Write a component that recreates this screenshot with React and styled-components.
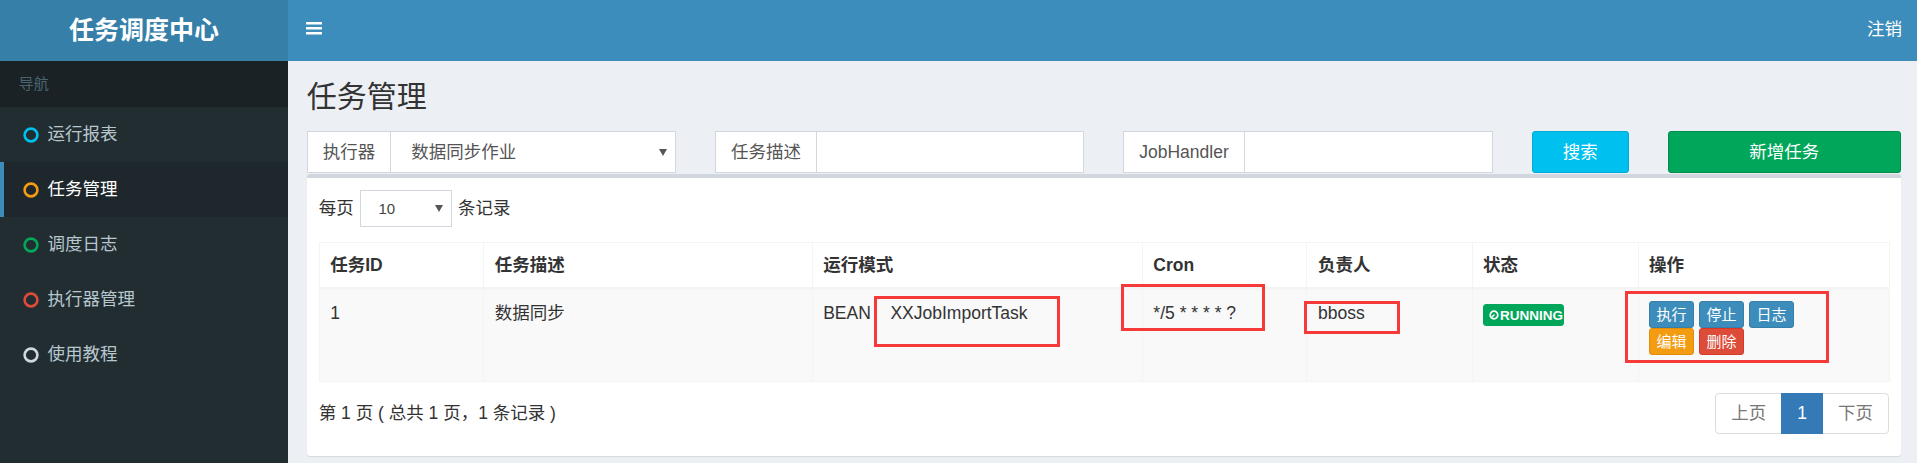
import React from 'react';
import styled, { createGlobalStyle } from 'styled-components';

const GlobalStyle = createGlobalStyle`
  *, *::before, *::after { box-sizing: border-box; }
  html, body { margin: 0; padding: 0; }
  body {
    background: #ecf0f5;
    font-family: "Liberation Sans", "Noto Sans CJK SC", sans-serif;
    font-size: 17.5px;
    line-height: 1.42857;
    color: #333;
  }
`;

const Layout = styled.div`
  display: flex;
  width: 1917px;
  height: 463px;
  overflow: hidden;
`;

const Sidebar = styled.aside`
  width: 288px;
  flex: none;
  background: #222d32;
  display: flex;
  flex-direction: column;
`;

const Logo = styled.div`
  height: 61px;
  background: #367fa9;
  color: #fff;
  font-size: 25px;
  font-weight: 700;
  display: flex;
  align-items: center;
  justify-content: center;
`;

const NavHeader = styled.div`
  height: 46px;
  background: #1a2226;
  color: #4b646f;
  font-size: 15px;
  padding-left: 18.75px;
  display: flex;
  align-items: center;
`;

const MenuItem = styled.div`
  height: 55px;
  display: flex;
  align-items: center;
  padding-left: 18.5px;
  border-left: 4px solid ${p => (p.$active ? '#3c8dbc' : 'transparent')};
  background: ${p => (p.$active ? '#1e282c' : 'transparent')};
  color: ${p => (p.$active ? '#fff' : '#b8c7ce')};
`;

const MenuIcon = styled.span`
  width: 25px;
  flex: none;
  display: flex;
  align-items: center;
`;

const Main = styled.div`
  flex: 1;
  display: flex;
  flex-direction: column;
  min-width: 0;
`;

const Navbar = styled.header`
  height: 61px;
  flex: none;
  background: #3c8dbc;
  color: #fff;
  display: flex;
  align-items: center;
  justify-content: space-between;
  padding: 0 15px 0 18px;
`;

const Burger = styled.svg`
  margin-top: -4px;
`;

const Logout = styled.span`
  margin-top: -3px;
`;

const Content = styled.section`
  padding: 18.75px 16px 0 18.7px;
`;

const Title = styled.h1`
  margin: 0;
  font-size: 30px;
  line-height: 33px;
  font-weight: 400;
  color: #333;
`;

const FilterRow = styled.div`
  display: grid;
  grid-template-columns: repeat(12, 1fr);
  margin: 18.25px -19.4px 0;
`;

const Col = styled.div`
  grid-column: span ${p => p.$span};
  padding: 0 19.4px;
`;

const InputGroup = styled.div`
  display: flex;
  height: 42px;
`;

const Addon = styled.span`
  flex: none;
  display: flex;
  align-items: center;
  padding: 0 15px;
  background: #fff;
  color: #555;
  border: 1px solid #d2d6de;
  border-right: 0;
  white-space: nowrap;
`;

const Field = styled.div`
  flex: 1;
  display: flex;
  align-items: center;
  justify-content: space-between;
  background: #fff;
  border: 1px solid #d2d6de;
  color: #555;
  padding: 0 8px 0 20px;
`;

const Caret = styled.svg`
  flex: none;
`;

const ActionButton = styled.div`
  height: 42px;
  display: flex;
  align-items: center;
  justify-content: center;
  border-radius: 3px;
  color: #fff;
  background: ${p => p.$bg};
  border: 1px solid ${p => p.$border};
`;

const Box = styled.div`
  margin-top: 1px;
  background: #fff;
  border-top: 4px solid #d2d6de;
  border-radius: 3px;
  box-shadow: 0 1px 1px rgba(0, 0, 0, 0.1);
  padding: 12.3px 12px 21.5px;
`;

const LengthRow = styled.div`
  display: flex;
  align-items: center;
  gap: 6px;
  height: 37px;
`;

const LengthSelect = styled.div`
  width: 92.4px;
  height: 37px;
  display: flex;
  align-items: center;
  justify-content: space-between;
  border: 1px solid #d2d6de;
  padding: 0 8px 0 17.7px;
  font-size: 15px;
  color: #444;
`;

const Table = styled.table`
  width: 100%;
  margin-top: 15px;
  border-collapse: collapse;
  table-layout: fixed;
  border: 1px solid #f4f4f4;
`;

const Th = styled.th`
  height: 46px;
  padding: 0 10.5px;
  text-align: left;
  font-weight: 700;
  color: #333;
  border: 1px solid #f4f4f4;
  border-bottom: 3px solid #f4f4f4;
`;

const Td = styled.td`
  height: 92.5px;
  padding: 11px 10.5px 0;
  vertical-align: top;
  background: #f9f9f9;
  border: 1px solid #f4f4f4;
  position: relative;
  color: #333;
`;

const Mark = styled.div`
  position: absolute;
  border: 3px solid #f63a3a;
  pointer-events: none;
`;

const HandlerName = styled.span`
  margin-left: 19.6px;
`;

const Badge = styled.span`
  display: inline-flex;
  align-items: center;
  gap: 1px;
  height: 22px;
  margin-top: 3px;
  padding: 0 1px 0 6px;
  background: #00a65a;
  border-radius: 3.5px;
  color: #fff;
  font-size: 13.5px;
  font-weight: 700;
  line-height: 1;
`;

const BtnLines = styled.div`
  display: flex;
  flex-direction: column;
`;

const BtnLine = styled.div`
  display: flex;
  gap: 5px;
`;

const SmallBtn = styled.span`
  width: 45px;
  height: 27px;
  display: inline-flex;
  align-items: center;
  justify-content: center;
  font-size: 15px;
  color: #fff;
  border-radius: 3px;
  background: ${p => p.$bg};
  border: 1px solid ${p => p.$border};
`;

const InfoRow = styled.div`
  margin-top: 11px;
  display: flex;
  align-items: center;
  justify-content: space-between;
`;

const Pager = styled.div`
  display: flex;
`;

const PageItem = styled.span`
  height: 41.4px;
  display: flex;
  align-items: center;
  padding: 0 15px;
  margin-left: -1px;
  border: 1px solid ${p => (p.$active ? '#337ab7' : '#ddd')};
  background: ${p => (p.$active ? '#337ab7' : '#fff')};
  color: ${p => (p.$active ? '#fff' : '#777')};
  position: relative;
  z-index: ${p => (p.$active ? 2 : 1)};
  &:first-child { border-radius: 4px 0 0 4px; margin-left: 0; }
  &:last-child { border-radius: 0 4px 4px 0; }
`;

const Circle = ({ color }) => (
  <svg width="16" height="16" viewBox="0 0 16 16">
    <circle cx="8" cy="8" r="6.4" fill="none" stroke={color} strokeWidth="2.6" />
  </svg>
);

const CaretIcon = () => (
  <Caret width="8" height="7" viewBox="0 0 8 7">
    <polygon points="0,0 8,0 4,7" fill="#555" />
  </Caret>
);

const Clock = () => (
  <svg width="10" height="10" viewBox="0 0 10 10">
    <circle cx="5" cy="5" r="3.8" fill="none" stroke="#fff" strokeWidth="1.7" />
    <path d="M5 5 L3.3 6.6" stroke="#fff" strokeWidth="1.5" strokeLinecap="round" />
  </svg>
);

const menu = [
  { label: '运行报表', color: '#00c0ef' },
  { label: '任务管理', color: '#f39c12', active: true },
  { label: '调度日志', color: '#00a65a' },
  { label: '执行器管理', color: '#dd4b39' },
  { label: '使用教程', color: '#d2d6de' },
];

const colWidths = [164.6, 328.4, 330.2, 164.6, 165.1, 166, 251.3];
const headers = ['任务ID', '任务描述', '运行模式', 'Cron', '负责人', '状态', '操作'];

export default function App() {
  return (
    <>
      <GlobalStyle />
      <Layout>
        <Sidebar>
          <Logo>任务调度中心</Logo>
          <NavHeader>导航</NavHeader>
          {menu.map(m => (
            <MenuItem key={m.label} $active={m.active}>
              <MenuIcon>
                <Circle color={m.color} />
              </MenuIcon>
              {m.label}
            </MenuItem>
          ))}
        </Sidebar>
        <Main>
          <Navbar>
            <Burger width="16" height="13" viewBox="0 0 16 13">
              <rect x="0" y="0" width="16" height="2.6" rx="0.5" fill="#fff" />
              <rect x="0" y="5" width="16" height="2.6" rx="0.5" fill="#fff" />
              <rect x="0" y="10" width="16" height="2.6" rx="0.5" fill="#fff" />
            </Burger>
            <Logout>注销</Logout>
          </Navbar>
          <Content>
            <Title>任务管理</Title>
            <FilterRow>
              <Col $span={3}>
                <InputGroup>
                  <Addon>执行器</Addon>
                  <Field>
                    数据同步作业
                    <CaretIcon />
                  </Field>
                </InputGroup>
              </Col>
              <Col $span={3}>
                <InputGroup>
                  <Addon>任务描述</Addon>
                  <Field />
                </InputGroup>
              </Col>
              <Col $span={3}>
                <InputGroup>
                  <Addon>JobHandler</Addon>
                  <Field />
                </InputGroup>
              </Col>
              <Col $span={1}>
                <ActionButton $bg="#00c0ef" $border="#00acd6">搜索</ActionButton>
              </Col>
              <Col $span={2}>
                <ActionButton $bg="#00a65a" $border="#008d4c">新增任务</ActionButton>
              </Col>
            </FilterRow>
            <Box>
              <LengthRow>
                每页
                <LengthSelect>
                  10
                  <CaretIcon />
                </LengthSelect>
                条记录
              </LengthRow>
              <Table>
                <colgroup>
                  {colWidths.map((w, i) => (
                    <col key={i} style={{ width: `${w}px` }} />
                  ))}
                </colgroup>
                <thead>
                  <tr>
                    {headers.map(h => (
                      <Th key={h}>{h}</Th>
                    ))}
                  </tr>
                </thead>
                <tbody>
                  <tr>
                    <Td>1</Td>
                    <Td>数据同步</Td>
                    <Td>
                      BEAN<HandlerName>XXJobImportTask</HandlerName>
                      <Mark style={{ left: 61.6, top: 5.7, width: 186, height: 50.6 }} />
                    </Td>
                    <Td>
                      */5 * * * * ?
                      <Mark style={{ left: -21.4, top: -6, width: 143.2, height: 46.7 }} />
                    </Td>
                    <Td>
                      bboss
                      <Mark style={{ left: -3.5, top: 10.7, width: 96, height: 33.3 }} />
                    </Td>
                    <Td>
                      <Badge>
                        <Clock />
                        RUNNING
                      </Badge>
                    </Td>
                    <Td>
                      <BtnLines>
                        <BtnLine>
                          <SmallBtn $bg="#3c8dbc" $border="#367fa9">执行</SmallBtn>
                          <SmallBtn $bg="#3c8dbc" $border="#367fa9">停止</SmallBtn>
                          <SmallBtn $bg="#3c8dbc" $border="#367fa9">日志</SmallBtn>
                        </BtnLine>
                        <BtnLine>
                          <SmallBtn $bg="#f39c12" $border="#e08e0b">编辑</SmallBtn>
                          <SmallBtn $bg="#dd4b39" $border="#d73925">删除</SmallBtn>
                        </BtnLine>
                      </BtnLines>
                      <Mark style={{ left: -13.4, top: 1, width: 204, height: 72 }} />
                    </Td>
                  </tr>
                </tbody>
              </Table>
              <InfoRow>
                <span>第 1 页 ( 总共 1 页，1 条记录 )</span>
                <Pager>
                  <PageItem>上页</PageItem>
                  <PageItem $active>1</PageItem>
                  <PageItem>下页</PageItem>
                </Pager>
              </InfoRow>
            </Box>
          </Content>
        </Main>
      </Layout>
    </>
  );
}
